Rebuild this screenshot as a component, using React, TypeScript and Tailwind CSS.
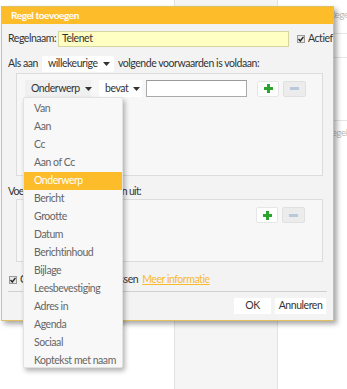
import React from "react";

const font = { fontFamily: 'Lato, "Noto Sans", sans-serif' };

function Caret() {
  return (
    <svg width="7" height="4" viewBox="0 0 7 4" className="ml-[5px] shrink-0">
      <path d="M0 0 L7 0 L3.5 4 Z" fill="#333" />
    </svg>
  );
}

function Plus() {
  return (
    <div className="w-[22px] h-[16px] bg-white border border-[#e6e6e6] rounded-[2px] flex items-center justify-center shrink-0">
      <svg width="9" height="9" viewBox="0 0 9 9">
        <path d="M3 0 H6 V3 H9 V6 H6 V9 H3 V6 H0 V3 H3 Z" fill="#2ca52c" />
      </svg>
    </div>
  );
}

function Minus() {
  return (
    <div className="w-[23px] h-[16px] bg-[#ececec] border border-[#e0e0e0] rounded-[2px] flex items-center justify-center shrink-0">
      <div className="w-[9px] h-[3px] bg-[#b9c9dc]" />
    </div>
  );
}

function Check() {
  return (
    <div className="w-[8px] h-[8px] bg-[#e8e8e8] border border-[#999] flex items-center justify-center shrink-0">
      <svg width="6" height="6" viewBox="0 0 6 6">
        <path d="M0.5 3 L2.3 5 L5.5 0.8" stroke="#222" strokeWidth="1.4" fill="none" />
      </svg>
    </div>
  );
}

const items = [
  "Van",
  "Aan",
  "Cc",
  "Aan of Cc",
  "Onderwerp",
  "Bericht",
  "Grootte",
  "Datum",
  "Berichtinhoud",
  "Bijlage",
  "Leesbevestiging",
  "Adres in",
  "Agenda",
  "Sociaal",
  "Koptekst met naam",
];

export default function App() {
  return (
    <div className="relative w-[347px] h-[389px] bg-white overflow-hidden text-[10.5px] tracking-[-0.45px] text-[#333] whitespace-nowrap" style={font}>
      {/* background page */}
      <div className="absolute left-[174px] top-0 w-[104px] h-[389px] bg-[#f5f5f5] border-x border-[#e2e2e2]" />
      <div className="absolute left-[329px] top-[7px] text-[10px] text-[#bbb]">Regelaar</div>
      <div className="absolute left-[334px] top-[33px] w-[13px] h-px bg-[#e6e6e6]" />
      <div className="absolute left-[334px] top-[57px] w-[13px] h-px bg-[#e6e6e6]" />
      <div className="absolute left-[334px] top-[120px] w-[13px] h-px bg-[#e6e6e6]" />
      <div className="absolute left-[326px] top-[125px] text-[10px] text-[#bbb]">Regels</div>

      {/* dialog */}
      <div className="absolute left-[1px] top-[6px] w-[333px] h-[315px] bg-[#f3f3f3] border border-[#e0c060] shadow-[3px_3px_5px_rgba(0,0,0,0.35)] flex flex-col">
        <div className="h-[17px] bg-[#fdbd2b] text-white font-bold text-[10px] tracking-[-0.4px] pl-[9px] flex items-center shrink-0">
          Regel toevoegen
        </div>
        <div className="flex flex-col px-[6px]">
          <div className="flex items-center mt-[7px] h-[16px]">
            <span className="w-[50px] shrink-0">Regelnaam:</span>
            <div className="w-[231px] shrink-0 h-[16px] bg-[#ffffc4] border border-[#d6d6a0] pl-[3px] flex items-center">Telenet</div>
            <div className="ml-[8px] flex items-center gap-[3px]">
              <Check />
              <span>Actief</span>
            </div>
          </div>
          <div className="flex items-center mt-[9px] h-[16px]">
            <span className="w-[34px] shrink-0">Als aan</span>
            <div className="w-[72px] shrink-0 h-[16px] bg-white flex items-center pl-[6px]">
              willekeurige
              <Caret />
            </div>
            <span className="ml-[4px]">volgende voorwaarden is voldaan:</span>
          </div>
          <div className="ml-[8px] w-[307px] h-[103px] mt-px bg-[#f7f7f7] border border-[#dcdcdc] pt-[6px] pl-[8px]">
            <div className="flex items-center">
              <div className="w-[66px] shrink-0 h-[17px] bg-[#f0f0f0] flex items-center pl-[6px]">
                Onderwerp
                <Caret />
              </div>
              <div className="ml-[8px] w-[43px] shrink-0 h-[17px] bg-white flex items-center pl-[6px]">
                bevat
                <Caret />
              </div>
              <div className="ml-[4px] w-[101px] shrink-0 h-[17px] bg-white border border-[#aaa] border-t-[#999]" />
              <div className="ml-[10px]">
                <Plus />
              </div>
              <div className="ml-[4px]">
                <Minus />
              </div>
            </div>
          </div>
          <div className="h-[23px] flex items-center pt-[8px] tracking-[-0.7px]">Voer de volgende handelingen uit:</div>
          <div className="ml-[8px] w-[307px] h-[63px] bg-[#f7f7f7] border border-[#dcdcdc] pt-[7px] pr-[17px] flex justify-end items-start">
            <Plus />
            <div className="ml-[4px]">
              <Minus />
            </div>
          </div>
          <div className="flex items-center mt-[13px] h-[10px] pl-px gap-[3px]">
            <Check />
            <span>Geen regels meer toepassen</span>
            <span className="text-[#f9b92c] underline ml-[1px]">Meer informatie</span>
          </div>
          <div className="mt-[6px] h-px bg-[#d0d0d0]" />
          <div className="flex justify-end mt-[6px] pr-[1px] gap-[4px]">
            <div className="w-[37px] h-[16px] bg-white flex items-center justify-center">OK</div>
            <div className="w-[51px] h-[16px] bg-white flex items-center justify-center">Annuleren</div>
          </div>
        </div>

        {/* dropdown */}
        <div className="absolute left-[21px] top-[90px] w-[100px] h-[271px] bg-[#f8f8f8] border border-[#e2e2e2] rounded-[2px] shadow-[2px_3px_5px_rgba(0,0,0,0.3)] pt-[2px]">
          {items.map((it) => (
            <div
              key={it}
              className={
                it === "Onderwerp"
                  ? "h-[18px] flex items-center pl-[10px] bg-[#fdbd2b] text-white"
                  : "h-[18px] flex items-center pl-[10px] text-[#666]"
              }
            >
              {it}
            </div>
          ))}
        </div>
      </div>
    </div>
  );
}
